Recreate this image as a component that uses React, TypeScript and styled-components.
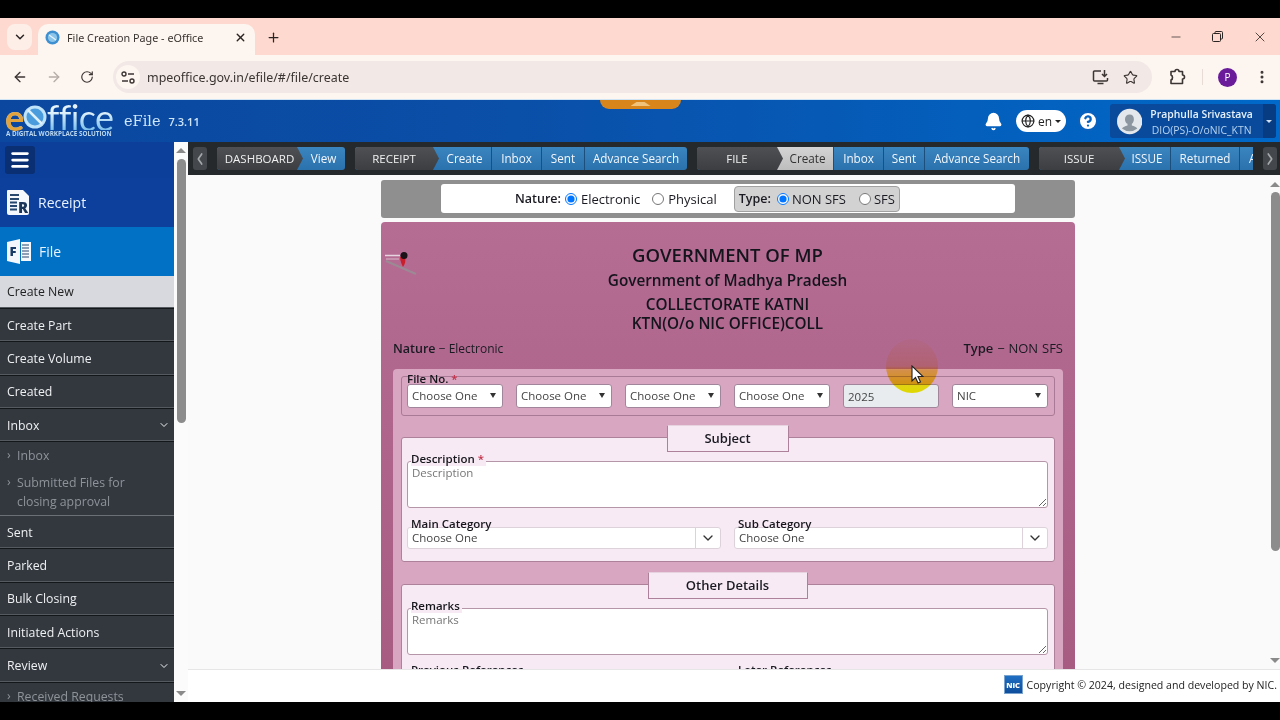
import React from 'react'
import styled, { createGlobalStyle } from 'styled-components'
import {
  ArrowLeft, ArrowRight, Bell, ChevronDown, ChevronLeft, ChevronRight, CircleHelp, Globe, Menu, Minus, MoreVertical,
  Plus, RotateCw, Star, X
} from 'lucide-react'

const GlobalStyle = createGlobalStyle`
  html, body { margin: 0; padding: 0; background: #000; }
  * { box-sizing: border-box; }
  body { font-family: "Open Sans", "Noto Sans", "Liberation Sans", sans-serif; }
`

const Page = styled.div`
  position: relative;
  width: 1280px;
  height: 720px;
  padding: 18px 0;
  background: #000;
  display: flex;
  flex-direction: column;
  overflow: hidden;
`

/* browser chrome */
const TabStrip = styled.div`
  height: 37px;
  flex: none;
  background: #fdd9cf;
  display: flex;
  align-items: flex-end;
  padding-left: 7px;
  color: #2a2422;
`
const TabMenu = styled.div`
  width: 25px;
  height: 26px;
  margin-bottom: 5px;
  border-radius: 8px;
  background: #feeee8;
  display: flex;
  align-items: center;
  justify-content: center;
`
const Tab = styled.div`
  width: 217px;
  height: 31px;
  margin-left: 6px;
  padding: 0 8px 5px 7px;
  background: #fdf5f0;
  border-radius: 10px 10px 0 0;
  display: flex;
  align-items: center;
  font-size: 10.8px;
  font-family: "Noto Sans", sans-serif;
`
const TabTitle = styled.span`
  margin-left: 7px;
  flex: 1;
  color: #3a3431;
`
const NewTab = styled.div`
  margin: 0 0 10px 11px;
  display: flex;
`
const WindowControls = styled.div`
  margin-left: auto;
  height: 100%;
  display: flex;
  align-items: center;
  gap: 29px;
  padding: 0 12px 0 0;
`
const Toolbar = styled.div`
  height: 45px;
  flex: none;
  background: #fdf5f0;
  border-bottom: 1px solid #cfe4f5;
  display: flex;
  align-items: center;
  padding-left: 12px;
  color: #3b3533;
`
const NavIcons = styled.div`
  width: 101px;
  display: flex;
  gap: 18px;
  align-items: center;
`
const AddressBar = styled.div`
  width: 1039px;
  height: 32px;
  border-radius: 16px;
  background: #f2e8e5;
  display: flex;
  align-items: center;
  padding: 0 14px 0 3px;
  gap: 7px;
`
const SiteInfo = styled.div`
  width: 24px;
  height: 24px;
  border-radius: 50%;
  background: #fdf5f0;
  display: flex;
  align-items: center;
  justify-content: center;
`
const Url = styled.span`
  flex: 1;
  font-size: 12.45px;
  font-family: "Noto Sans", sans-serif;
  color: #3a3533;
`
const ToolbarEnd = styled.div`
  flex: 1;
  display: flex;
  align-items: center;
  padding-left: 16px;
`
const Divider = styled.div`
  width: 1px;
  height: 16px;
  background: #e8dcd6;
  margin: 0 15px 0 16px;
`
const Profile = styled.div`
  width: 19px;
  height: 19px;
  border-radius: 50%;
  background: #6a1b9a;
  color: #fff;
  font-size: 10px;
  display: flex;
  align-items: center;
  justify-content: center;
  margin-right: 17px;
`
const StarSlot = styled.span`
  display: flex;
  margin-left: 7px;
`

/* app header */
const AppHeader = styled.header`
  position: relative;
  height: 42px;
  flex: none;
  background: linear-gradient(90deg, #0b479f 0%, #0a4fa8 40%, #0069c9 100%);
  display: flex;
  align-items: center;
  color: #fff;
`
const PullTab = styled.div`
  position: absolute;
  left: 600px;
  top: 0;
  width: 81px;
  height: 9px;
  background: #d8861c;
  border-radius: 0 0 12px 12px;
  display: flex;
  justify-content: center;
  &::after {
    content: '';
    width: 20px;
    height: 4px;
    margin-top: 2px;
    background: #f0c27a;
    clip-path: polygon(30% 0, 70% 0, 100% 100%, 0 100%);
  }
`
const Logo = styled.div`
  width: 119px;
  margin-left: 5px;
  display: flex;
  flex-direction: column;
`
const LogoWord = styled.div`
  display: flex;
  align-items: center;
  height: 26px;
  font-family: "Lato", sans-serif;
  font-size: 36px;
  line-height: 26px;
  letter-spacing: -0.6px;
  background: linear-gradient(#e4f3fc 30%, #7cc0ec);
  -webkit-background-clip: text;
  color: transparent;
`
const LogoE = styled.span`
  color: #e2a23c;
  font-weight: 700;
  margin-right: -1px;
`
const LogoTag = styled.div`
  font-size: 6.3px;
  font-weight: 700;
  line-height: 8px;
  padding-left: 1px;
  color: #bcd7ee;
  white-space: nowrap;
`
const AppName = styled.span`
  font-family: "DejaVu Serif", serif;
  font-size: 14.5px;
  color: #cfe6f8;
`
const Version = styled.span`
  margin-left: 8px;
  font-size: 11px;
  font-weight: 600;
  color: #cfe6f8;
`
const HeaderEnd = styled.div`
  margin-left: auto;
  display: flex;
  align-items: center;
  padding-right: 4px;
`
const LangPill = styled.div`
  width: 50px;
  height: 22px;
  margin: 0 11px 0 13px;
  border-radius: 11px;
  background: #fff;
  color: #222;
  display: flex;
  align-items: center;
  justify-content: center;
  gap: 3px;
  font-size: 12px;
`
const Caret = styled.span<{ $color?: string }>`
  width: 0;
  height: 0;
  border-left: 3px solid transparent;
  border-right: 3px solid transparent;
  border-top: 3px solid ${p => p.$color || '#222'};
`
const UserBox = styled.div`
  width: 166px;
  height: 34px;
  margin-left: 11px;
  background: #0a4a9c;
  border-radius: 3px;
  display: flex;
  align-items: center;
  padding-left: 7px;
`
const UserText = styled.div`
  margin-left: 8px;
  padding: 1px 10px 0 0;
  flex: 1;
  font-size: 10.4px;
  line-height: 16px;
  text-align: center;
  white-space: nowrap;
`
const UserName = styled.div`
  font-weight: 600;
  color: #e6f1fb;
`
const UserRole = styled.div`
  color: #b6d4f0;
`
const UserCaret = styled.div`
  width: 14px;
  height: 100%;
  background: #073b82;
  border-radius: 0 3px 3px 0;
  display: flex;
  align-items: center;
  justify-content: center;
`

/* page body */
const Body = styled.div`
  flex: 1;
  min-height: 0;
  display: flex;
`
const Sidebar = styled.aside`
  width: 174px;
  flex: none;
  background: #33383f;
  overflow: hidden;
`
const SideTop = styled.div`
  height: 36px;
  background: #0b3f9a;
  padding: 4px 5px;
`
const Burger = styled.div`
  width: 30px;
  height: 28px;
  background: #0a2f72;
  border-radius: 3px;
  color: #fff;
  display: flex;
  align-items: center;
  justify-content: center;
`
const BigLink = styled.div<{ $active?: boolean }>`
  height: 49px;
  padding-left: 6px;
  background: ${p => (p.$active ? '#0071c5' : '#0d409d')};
  color: #e8f3fc;
  font-size: 14px;
  display: flex;
  align-items: center;
  gap: 7px;
`
const MenuRow = styled.div<{ $current?: boolean }>`
  height: ${p => (p.$current ? '33px' : '33.3px')};
  padding: 0 4px ${p => (p.$current ? '2px' : '0')} 7px;
  display: flex;
  align-items: center;
  justify-content: space-between;
  font-size: 12.3px;
  background: ${p => (p.$current ? '#d7d9de' : '#33383f')};
  color: ${p => (p.$current ? '#222' : '#eef0f2')};
  border-bottom: 1px solid #14171a;
  box-shadow: inset 0 -1px 0 #555a60;
`
const SubRow = styled.div`
  padding: 0 30px 0 17px;
  position: relative;
  font-size: 12.3px;
  line-height: 19px;
  color: #8e939a;
  margin-bottom: 8px;
  white-space: normal;
  &::before {
    content: '›';
    position: absolute;
    left: 7px;
    top: -1px;
  }
`
const SubBlock = styled.div<{ $top: number; $open?: boolean }>`
  padding-top: ${p => p.$top}px;
  height: ${p => (p.$open ? '74px' : 'auto')};
  border-bottom: ${p => (p.$open ? '1px solid #6b7076' : '0')};
`
const WideSub = styled(SubRow)`
  padding-right: 0;
  white-space: nowrap;
`
const Scrollbar = styled.div<{ $width: number; $bg: string }>`
  width: ${p => p.$width}px;
  flex: none;
  background: ${p => p.$bg};
  display: flex;
  flex-direction: column;
  align-items: center;
`
const ArrowUp = styled.div<{ $top: number }>`
  margin-top: ${p => p.$top}px;
  width: 0;
  height: 0;
  border-left: 5px solid transparent;
  border-right: 5px solid transparent;
  border-bottom: 5px solid #8a8a8a;
`
const ArrowDown = styled.div`
  margin-top: auto;
  margin-bottom: 6px;
  width: 0;
  height: 0;
  border-left: 5px solid transparent;
  border-right: 5px solid transparent;
  border-top: 5px solid #8a8a8a;
`
const Thumb = styled.div<{ $top: number; $height: number }>`
  margin-top: ${p => p.$top}px;
  width: 9px;
  height: ${p => p.$height}px;
  background: #8c8c8c;
  border-radius: 5px;
`
const Main = styled.main`
  flex: 1;
  min-width: 0;
  display: flex;
  flex-direction: column;
  background: #fafafa;
`

/* top nav strip */
const NavStrip = styled.nav`
  height: 33px;
  flex: none;
  background: #26292c;
  display: flex;
  align-items: center;
  padding: 0 0 0 5px;
  color: #fff;
`
const ScrollBtn = styled.div`
  width: 14px;
  height: 23px;
  flex: none;
  border-radius: 3px;
  background: #44474b;
  color: #a5a8ab;
  display: flex;
  align-items: center;
  justify-content: center;
  svg { flex: none; transform: scaleX(0.7); }
`
const NavClip = styled.div`
  width: 1036px;
  flex: none;
  margin: 0 10px;
  display: flex;
  gap: 10px;
  overflow: hidden;
`
const NavGroup = styled.div`
  flex: none;
  height: 23px;
  display: flex;
  border-radius: 3px;
  overflow: hidden;
  background: linear-gradient(#3a84c0, #2a72ae);
`
const NavHead = styled.div<{ $width: number; $shift?: number }>`
  position: relative;
  width: ${p => p.$width}px;
  padding: 0 0 1px ${p => p.$shift || 0}px;
  background: linear-gradient(#4e5053, #3c3e41);
  font-size: 11.5px;
  display: flex;
  align-items: center;
  justify-content: center;
  color: #f0f0f0;
  &::after {
    content: '';
    position: absolute;
    left: 100%;
    top: 0;
    width: 6px;
    height: 23px;
    background: linear-gradient(#4e5053, #3c3e41);
    clip-path: polygon(0 0, 100% 50%, 0 100%);
  }
`
const NavItem = styled.div<{ $width: number; $current?: boolean }>`
  flex: none;
  width: ${p => p.$width}px;
  padding-bottom: 1px;
  font-size: 11.7px;
  display: flex;
  align-items: center;
  justify-content: center;
  white-space: nowrap;
  overflow: hidden;
  border-right: 1px solid #1d4f7c;
  background: ${p => (p.$current ? 'linear-gradient(#d4d4d4, #bdbdbd)' : 'none')};
  color: ${p => (p.$current ? '#333' : '#f2f7fb')};
  &:nth-child(2) { padding-left: 5px; }
  &:last-child { border-right: 0; }
`

/* form area */
const Content = styled.div`
  flex: 1;
  min-height: 0;
  display: flex;
  overflow: hidden;
`
const FormColumn = styled.div`
  width: 694px;
  margin-left: 193px;
  padding-top: 5px;
  font-size: 12px;
  color: #1a1a22;
`
const NatureBar = styled.div`
  height: 38px;
  background: #8f8f8f;
  border-radius: 3px;
  padding: 4px 60px;
  margin-bottom: 4px;
`
const NatureInner = styled.div`
  height: 29px;
  background: #fff;
  border-radius: 3px;
  display: flex;
  align-items: center;
  padding-left: 74px;
  font-size: 13px;
`
const Strong = styled.strong`
  font-weight: 600;
  font-size: 12.5px;
`
const Radio = styled.input`
  width: 12px;
  height: 12px;
  margin: 0 4px;
`
const TypeBox = styled.div`
  width: 166px;
  height: 26px;
  margin-left: 17px;
  background: #d2d2d2;
  border: 1px solid #a0a0a0;
  border-radius: 4px;
  display: flex;
  align-items: center;
  padding-left: 4px;
  ${Radio} { margin: 0 3px 0 6px; }
`
const RadioLabel = styled.label<{ $gap?: number }>`
  display: flex;
  align-items: center;
  margin-right: ${p => p.$gap || 0}px;
  white-space: nowrap;
`
const Panel = styled.section`
  background: linear-gradient(#b56d94, #a65a80);
  border-radius: 4px 4px 0 0;
  padding-top: 21px;
`
const PanelHead = styled.div`
  display: grid;
  grid-template-columns: 40px 1fr 40px;
  padding: 0 4px;
`
const Titles = styled.div`
  text-align: center;
  font-weight: 600;
  color: #14141c;
  margin-left: -1px;
`
const Title = styled.div<{ $size: number; $height: number; $gap?: number }>`
  font-size: ${p => p.$size}px;
  line-height: ${p => p.$height}px;
  margin-bottom: ${p => p.$gap || 0}px;
`
const EmblemBox = styled.div`
  padding-top: 8px;
`
const InfoRow = styled.div`
  display: flex;
  justify-content: space-between;
  align-items: center;
  padding: 0 12px;
  height: 18px;
  margin-top: 7px;
  font-size: 12px;
`
const TypeInfo = styled.span`
  font-size: 13px;
  word-spacing: 0.5px;
  ${Strong} { font-size: 13px; }
`
const Inner = styled.div`
  margin: 12px 12px 0;
  padding: 7px 8px 20px;
  background: #d8a6c0;
  border-radius: 4px 4px 0 0;
`
const FileNoBox = styled.div`
  position: relative;
  display: flex;
  gap: 13px;
  height: 40px;
  padding: 7px 5px;
  border: 1px solid #a87a96;
  border-radius: 3px;
`
const FloatLabel = styled.label<{ $bg: string; $top?: number; $left?: number }>`
  position: absolute;
  left: ${p => p.$left ?? 4}px;
  top: ${p => p.$top ?? -9}px;
  padding-right: 2px;
  background: ${p => p.$bg};
  font-size: 11.5px;
  font-weight: 600;
  line-height: 14px;
  color: #16161c;
`
const Required = styled.span`
  color: #c4324a;
`
const SelectBox = styled.div<{ $disabled?: boolean }>`
  width: 96px;
  height: 24px;
  background: ${p => (p.$disabled ? '#e8ecef' : '#fff')};
  border: 1px solid #a1859a;
  border-radius: 3px;
  padding: 0 5px ${p => (p.$disabled ? '0' : '2px')} 4px;
  display: flex;
  align-items: center;
  justify-content: space-between;
  font-size: 11.5px;
  color: #444;
`
const SelectCaret = styled.span`
  width: 0;
  height: 0;
  border-left: 3.5px solid transparent;
  border-right: 3.5px solid transparent;
  border-top: 5px solid #333;
  margin-right: 1px;
`
const Card = styled.div<{ $gap: number }>`
  margin-top: ${p => p.$gap}px;
  padding: 0 6px 12px 5px;
  background: #f7eaf5;
  border: 1px solid #ad8199;
  border-radius: 3px;
`
const CardTab = styled.div<{ $width: number }>`
  width: ${p => p.$width}px;
  height: 27px;
  margin: -13px auto 9px;
  background: #f7eaf5;
  border: 1px solid #ad8199;
  border-top-color: #e7d2e0;
  font-size: 13px;
  font-weight: 600;
  text-align: center;
  line-height: 25px;
`
const AreaWrap = styled.div`
  position: relative;
  height: 47px;
`
const Area = styled.textarea`
  display: block;
  width: 100%;
  height: 47px;
  padding: 4px;
  border: 1px solid #b596a8;
  border-radius: 3px;
  background: #fff;
  font-family: inherit;
  font-size: 11.5px;
  line-height: 14px;
  outline: none;
  &::placeholder { color: #777; opacity: 1; }
`
const TwoCols = styled.div<{ $top: number }>`
  display: grid;
  grid-template-columns: 314px 314px;
  justify-content: space-between;
  margin-top: ${p => p.$top}px;
`
const Combo = styled.div`
  position: relative;
  height: 22px;
  background: #fff;
  border: 1px solid #ddd2da;
  border-radius: 3px;
  display: flex;
  align-items: center;
  font-size: 11.5px;
  line-height: 14px;
  color: #444;
  padding-left: 4px;
`
const ComboText = styled.span`
  flex: 1;
`
const ComboBtn = styled.div`
  width: 25px;
  height: 100%;
  border-left: 1px solid #ddd2da;
  display: flex;
  align-items: center;
  justify-content: center;
  color: #333;
`
const RefLabel = styled.div`
  font-size: 11.5px;
  font-weight: 600;
  line-height: 15px;
  padding-left: 4px;
`
const PageScroll = styled(Scrollbar)`
  margin-left: auto;
`
const Footer = styled.footer`
  height: 33px;
  flex: none;
  background: #fff;
  border-top: 1px solid #e6e6e6;
  display: flex;
  align-items: center;
  justify-content: flex-end;
  padding: 0 3px 3px 0;
  gap: 4px;
  font-size: 10.6px;
  color: #222;
`
const NicBadge = styled.div`
  width: 19px;
  height: 19px;
  background: linear-gradient(#1f6fc4, #0e4d9c);
  border: 1px solid #7aa4cf;
  color: #fff;
  font-size: 7.5px;
  font-weight: 800;
  display: flex;
  align-items: center;
  justify-content: center;
`

/* recording highlight and pointer */
const Halo = styled.div`
  position: absolute;
  left: 886px;
  top: 339px;
  width: 52px;
  height: 54px;
  border-radius: 50%;
  mix-blend-mode: multiply;
  background: linear-gradient(rgba(255, 225, 120, 0.1) 0%, rgba(255, 215, 110, 0.35) 50%, rgba(250, 210, 60, 0.8) 58%, rgba(248, 225, 30, 1) 80%, #f5ea00 100%);
`
const Pointer = styled.svg`
  position: absolute;
  left: 911px;
  top: 365px;
`

const Favicon = () => (
  <svg width="15" height="15" viewBox="0 0 15 15">
    <circle cx="7.5" cy="7.5" r="7" fill="#3e8fd0" />
    <circle cx="7.5" cy="7.5" r="4.6" fill="#8cc4ea" />
    <path d="M4 5l7 5" stroke="#e8f4fc" strokeWidth="1.2" />
  </svg>
)

const RestoreIcon = () => (
  <svg width="11" height="11" viewBox="0 0 11 11" fill="none" stroke="#2a2422" strokeWidth="1">
    <rect x="0.5" y="2.5" width="8" height="8" rx="1" />
    <path d="M3 2.5V1.5a1 1 0 0 1 1-1h5.5a1 1 0 0 1 1 1V7a1 1 0 0 1-1 1H8.5" />
  </svg>
)

const TuneIcon = () => (
  <svg width="14" height="13" viewBox="0 0 14 13" fill="none" stroke="#3b3533" strokeWidth="1.4">
    <circle cx="3" cy="3" r="2" />
    <path d="M7 3h6M1 10h6" />
    <circle cx="11" cy="10" r="2" />
  </svg>
)

const InstallIcon = () => (
  <svg width="17" height="16" viewBox="0 0 17 16" fill="none" stroke="#3b3533" strokeWidth="1.5">
    <path d="M9 2H2.5a1 1 0 0 0-1 1v8a1 1 0 0 0 1 1h12a1 1 0 0 0 1-1V9" />
    <path d="M5.5 14.5h6" />
    <path d="M12.5 1v6M10 5l2.5 2.5L15 5" />
  </svg>
)

const ExtensionIcon = () => (
  <svg width="18" height="18" viewBox="0 0 18 18" fill="none" stroke="#3b3533" strokeWidth="1.6" strokeLinejoin="round">
    <path d="M3 3.5h4a2 2 0 0 1 4 0h3.5V7a2 2 0 0 1 0 4v4.5H3V12a2.5 2.5 0 0 0 1.5-2.5A2.5 2.5 0 0 0 3 7z" />
  </svg>
)

const LogoGlobe = () => (
  <svg width="24" height="24" viewBox="0 0 24 24">
    <circle cx="12" cy="12" r="11.5" fill="#bfe3f8" />
    <circle cx="12" cy="12" r="8.5" fill="#4a9cdc" />
    <path d="M5 5l14 14" stroke="#dff1fc" strokeWidth="2.5" />
  </svg>
)

const Person = () => (
  <svg width="27" height="27" viewBox="0 0 27 27">
    <circle cx="13.5" cy="13.5" r="13.5" fill="#e4e8ec" />
    <path d="M13.5 6c3 0 4.5 2.2 4.5 5 0 2.4-1 4-2.2 5v1.8c2.6.8 4.8 1.8 5.9 3.2a13 13 0 0 1-16.4 0c1.1-1.4 3.3-2.4 5.9-3.2V16C9.5 15 8.5 13.4 8.5 11c0-2.8 2-5 5-5z" fill="#8b96a0" />
  </svg>
)

const ReceiptIcon = () => (
  <svg width="25" height="27" viewBox="0 0 25 27">
    <path d="M2 1h15l6 6v17a2 2 0 0 1-2 2H3a2 2 0 0 1-2-2V2a1 1 0 0 1 1-1z" fill="#f4f8fc" />
    <path d="M4 6h9M4 10h9M4 13.5h7M4 17h7M4 20.5h7" stroke="#27476f" strokeWidth="1.8" />
    <text x="12" y="24" fontSize="15" fontWeight="800" fill="#1b3558" fontFamily="Open Sans, sans-serif">R</text>
  </svg>
)

const FileIcon = () => (
  <svg width="26" height="27" viewBox="0 0 26 27">
    <path d="M1 4l13-3v25L1 23z" fill="#f4f8fc" />
    <path d="M15 4h10v19H15z" fill="#f4f8fc" />
    <path d="M16 7h7M16 10h7M16 13h7M16 16h7M16 19h7" stroke="#27476f" strokeWidth="1.2" />
    <text x="3.5" y="18" fontSize="13" fontWeight="800" fill="#173a66" fontFamily="Open Sans, sans-serif">F</text>
  </svg>
)

const Emblem = () => (
  <svg width="34" height="26" viewBox="0 0 34 26">
    <path d="M0 4.5h15" stroke="#e6d4de" strokeWidth="1.5" />
    <path d="M1 8h13" stroke="#d8b8c8" strokeWidth="1" />
    <path d="M1 10l30 13" stroke="#9b8a94" strokeWidth="2" />
    <path d="M15 6c0 4 2 8 3 10 2-3 3-6 2-10z" fill="#c91f2c" />
    <circle cx="19" cy="4.5" r="3.5" fill="#1a1216" />
  </svg>
)

const menuTop = ['Create Part', 'Create Volume', 'Created']
const menuMid = ['Sent', 'Parked', 'Bulk Closing', 'Initiated Actions']

export default function App() {
  return (
    <Page>
      <GlobalStyle />
      <TabStrip>
        <TabMenu><ChevronDown size={14} strokeWidth={2.5} /></TabMenu>
        <Tab>
          <Favicon />
          <TabTitle>File Creation Page - eOffice</TabTitle>
          <X size={13} strokeWidth={2.5} />
        </Tab>
        <NewTab><Plus size={15} strokeWidth={2} /></NewTab>
        <WindowControls>
          <Minus size={14} strokeWidth={1.2} />
          <RestoreIcon />
          <X size={16} strokeWidth={1.2} />
        </WindowControls>
      </TabStrip>

      <Toolbar>
        <NavIcons>
          <ArrowLeft size={16} strokeWidth={2} />
          <ArrowRight size={16} strokeWidth={2} color="#b5aca8" />
          <RotateCw size={14} strokeWidth={2} />
        </NavIcons>
        <AddressBar>
          <SiteInfo><TuneIcon /></SiteInfo>
          <Url>mpeoffice.gov.in/efile/#/file/create</Url>
          <InstallIcon />
          <StarSlot><Star size={15} strokeWidth={1.8} /></StarSlot>
        </AddressBar>
        <ToolbarEnd>
          <ExtensionIcon />
          <Divider />
          <Profile>P</Profile>
          <MoreVertical size={16} strokeWidth={2.5} />
        </ToolbarEnd>
      </Toolbar>

      <AppHeader>
        <PullTab />
        <Logo>
          <LogoWord><LogoE>e</LogoE><LogoGlobe />ffice</LogoWord>
          <LogoTag>A DIGITAL WORKPLACE SOLUTION</LogoTag>
        </Logo>
        <AppName>eFile</AppName>
        <Version>7.3.11</Version>
        <HeaderEnd>
          <Bell size={19} fill="#fff" color="#fff" />
          <LangPill><Globe size={14} color="#222" />en<Caret /></LangPill>
          <CircleHelp size={22} color="#0a62be" fill="#fff" strokeWidth={2.5} />
          <UserBox>
            <Person />
            <UserText>
              <UserName>Praphulla Srivastava</UserName>
              <UserRole>DIO(PS)-O/oNIC_KTN</UserRole>
            </UserText>
            <UserCaret><Caret $color="#cfe0f2" /></UserCaret>
          </UserBox>
        </HeaderEnd>
      </AppHeader>

      <Body>
        <Sidebar>
          <SideTop><Burger><Menu size={22} strokeWidth={3} /></Burger></SideTop>
          <BigLink><ReceiptIcon />Receipt</BigLink>
          <BigLink $active><FileIcon />File</BigLink>
          <MenuRow $current>Create New</MenuRow>
          {menuTop.map(m => <MenuRow key={m}>{m}</MenuRow>)}
          <MenuRow>Inbox<ChevronDown size={12} /></MenuRow>
          <SubBlock $top={4} $open>
            <SubRow>Inbox</SubRow>
            <SubRow>Submitted Files for closing approval</SubRow>
          </SubBlock>
          {menuMid.map(m => <MenuRow key={m}>{m}</MenuRow>)}
          <MenuRow>Review<ChevronDown size={12} /></MenuRow>
          <SubBlock $top={4}>
            <WideSub>Received Requests</WideSub>
          </SubBlock>
        </Sidebar>
        <Scrollbar $width={14} $bg="#fbfbfb">
          <ArrowUp $top={6} />
          <Thumb $top={6} $height={264} />
          <ArrowDown />
        </Scrollbar>

        <Main>
          <NavStrip>
            <ScrollBtn><ChevronLeft size={20} strokeWidth={2.5} /></ScrollBtn>
            <NavClip>
              <NavGroup>
                <NavHead $width={80} $shift={5}>DASHBOARD</NavHead>
                <NavItem $width={48}>View</NavItem>
              </NavGroup>
              <NavGroup>
                <NavHead $width={78}>RECEIPT</NavHead>
                <NavItem $width={59}>Create</NavItem>
                <NavItem $width={50}>Inbox</NavItem>
                <NavItem $width={43}>Sent</NavItem>
                <NavItem $width={102}>Advance Search</NavItem>
              </NavGroup>
              <NavGroup>
                <NavHead $width={80}>FILE</NavHead>
                <NavItem $width={57} $current>Create</NavItem>
                <NavItem $width={50}>Inbox</NavItem>
                <NavItem $width={41}>Sent</NavItem>
                <NavItem $width={104}>Advance Search</NavItem>
              </NavGroup>
              <NavGroup>
                <NavHead $width={80}>ISSUE</NavHead>
                <NavItem $width={52}>ISSUE</NavItem>
                <NavItem $width={69}>Returned</NavItem>
                <NavItem $width={104}>Advance Search</NavItem>
              </NavGroup>
            </NavClip>
            <ScrollBtn><ChevronRight size={20} strokeWidth={2.5} /></ScrollBtn>
          </NavStrip>

          <Content>
            <FormColumn>
              <NatureBar>
                <NatureInner>
                  <Strong>Nature:</Strong>
                  <RadioLabel $gap={8}><Radio type="radio" name="nature" defaultChecked />Electronic</RadioLabel>
                  <RadioLabel><Radio type="radio" name="nature" />Physical</RadioLabel>
                  <TypeBox>
                    <Strong>Type:</Strong>
                    <RadioLabel $gap={7}><Radio type="radio" name="type" defaultChecked />NON SFS</RadioLabel>
                    <RadioLabel><Radio type="radio" name="type" />SFS</RadioLabel>
                  </TypeBox>
                </NatureInner>
              </NatureBar>

              <Panel>
                <PanelHead>
                  <EmblemBox><Emblem /></EmblemBox>
                  <Titles>
                    <Title $size={18.5} $height={24} $gap={2}>GOVERNMENT OF MP</Title>
                    <Title $size={15.3} $height={22} $gap={4}>Government of Madhya Pradesh</Title>
                    <Title $size={15.3} $height={18} $gap={1}>COLLECTORATE KATNI</Title>
                    <Title $size={15.3} $height={18}>KTN(O/o NIC OFFICE)COLL</Title>
                  </Titles>
                </PanelHead>
                <InfoRow>
                  <span><Strong>Nature</Strong> − Electronic</span>
                  <TypeInfo><Strong>Type</Strong> − NON SFS</TypeInfo>
                </InfoRow>
                <Inner>
                  <FileNoBox>
                    <FloatLabel $bg="transparent" $top={-5} $left={5}>File No. <Required>*</Required></FloatLabel>
                    <SelectBox>Choose One<SelectCaret /></SelectBox>
                    <SelectBox>Choose One<SelectCaret /></SelectBox>
                    <SelectBox>Choose One<SelectCaret /></SelectBox>
                    <SelectBox>Choose One<SelectCaret /></SelectBox>
                    <SelectBox $disabled>2025</SelectBox>
                    <SelectBox>NIC<SelectCaret /></SelectBox>
                  </FileNoBox>

                  <Card $gap={21}>
                    <CardTab $width={122}>Subject</CardTab>
                    <AreaWrap>
                      <FloatLabel $bg="#f7eaf5">Description <Required>*</Required></FloatLabel>
                      <Area placeholder="Description" />
                    </AreaWrap>
                    <TwoCols $top={19}>
                      <Combo>
                        <FloatLabel $bg="transparent" $top={-11} $left={3}>Main Category</FloatLabel>
                        <ComboText>Choose One</ComboText>
                        <ComboBtn><ChevronDown size={16} /></ComboBtn>
                      </Combo>
                      <Combo>
                        <FloatLabel $bg="transparent" $top={-11} $left={3}>Sub Category</FloatLabel>
                        <ComboText>Choose One</ComboText>
                        <ComboBtn><ChevronDown size={16} /></ComboBtn>
                      </Combo>
                    </TwoCols>
                  </Card>

                  <Card $gap={22}>
                    <CardTab $width={160}>Other Details</CardTab>
                    <AreaWrap>
                      <FloatLabel $bg="#f7eaf5">Remarks</FloatLabel>
                      <Area placeholder="Remarks" />
                    </AreaWrap>
                    <TwoCols $top={7}>
                      <RefLabel>Previous References</RefLabel>
                      <RefLabel>Later References</RefLabel>
                    </TwoCols>
                  </Card>
                </Inner>
              </Panel>
            </FormColumn>
            <PageScroll $width={10} $bg="#fafafa">
              <ArrowUp $top={7} />
              <Thumb $top={5} $height={359} />
              <ArrowDown />
            </PageScroll>
          </Content>

          <Footer>
            <NicBadge>NIC</NicBadge>
            Copyright © 2024, designed and developed by NIC.
          </Footer>
        </Main>
      </Body>

      <Halo />
      <Pointer width="13" height="19" viewBox="0 0 13 19">
        <path d="M1 1v15l3.5-3.5 2.5 5.5 2.5-1-2.5-5.5H12z" fill="#fff" stroke="#222" strokeWidth="1.1" />
      </Pointer>
    </Page>
  )
}
